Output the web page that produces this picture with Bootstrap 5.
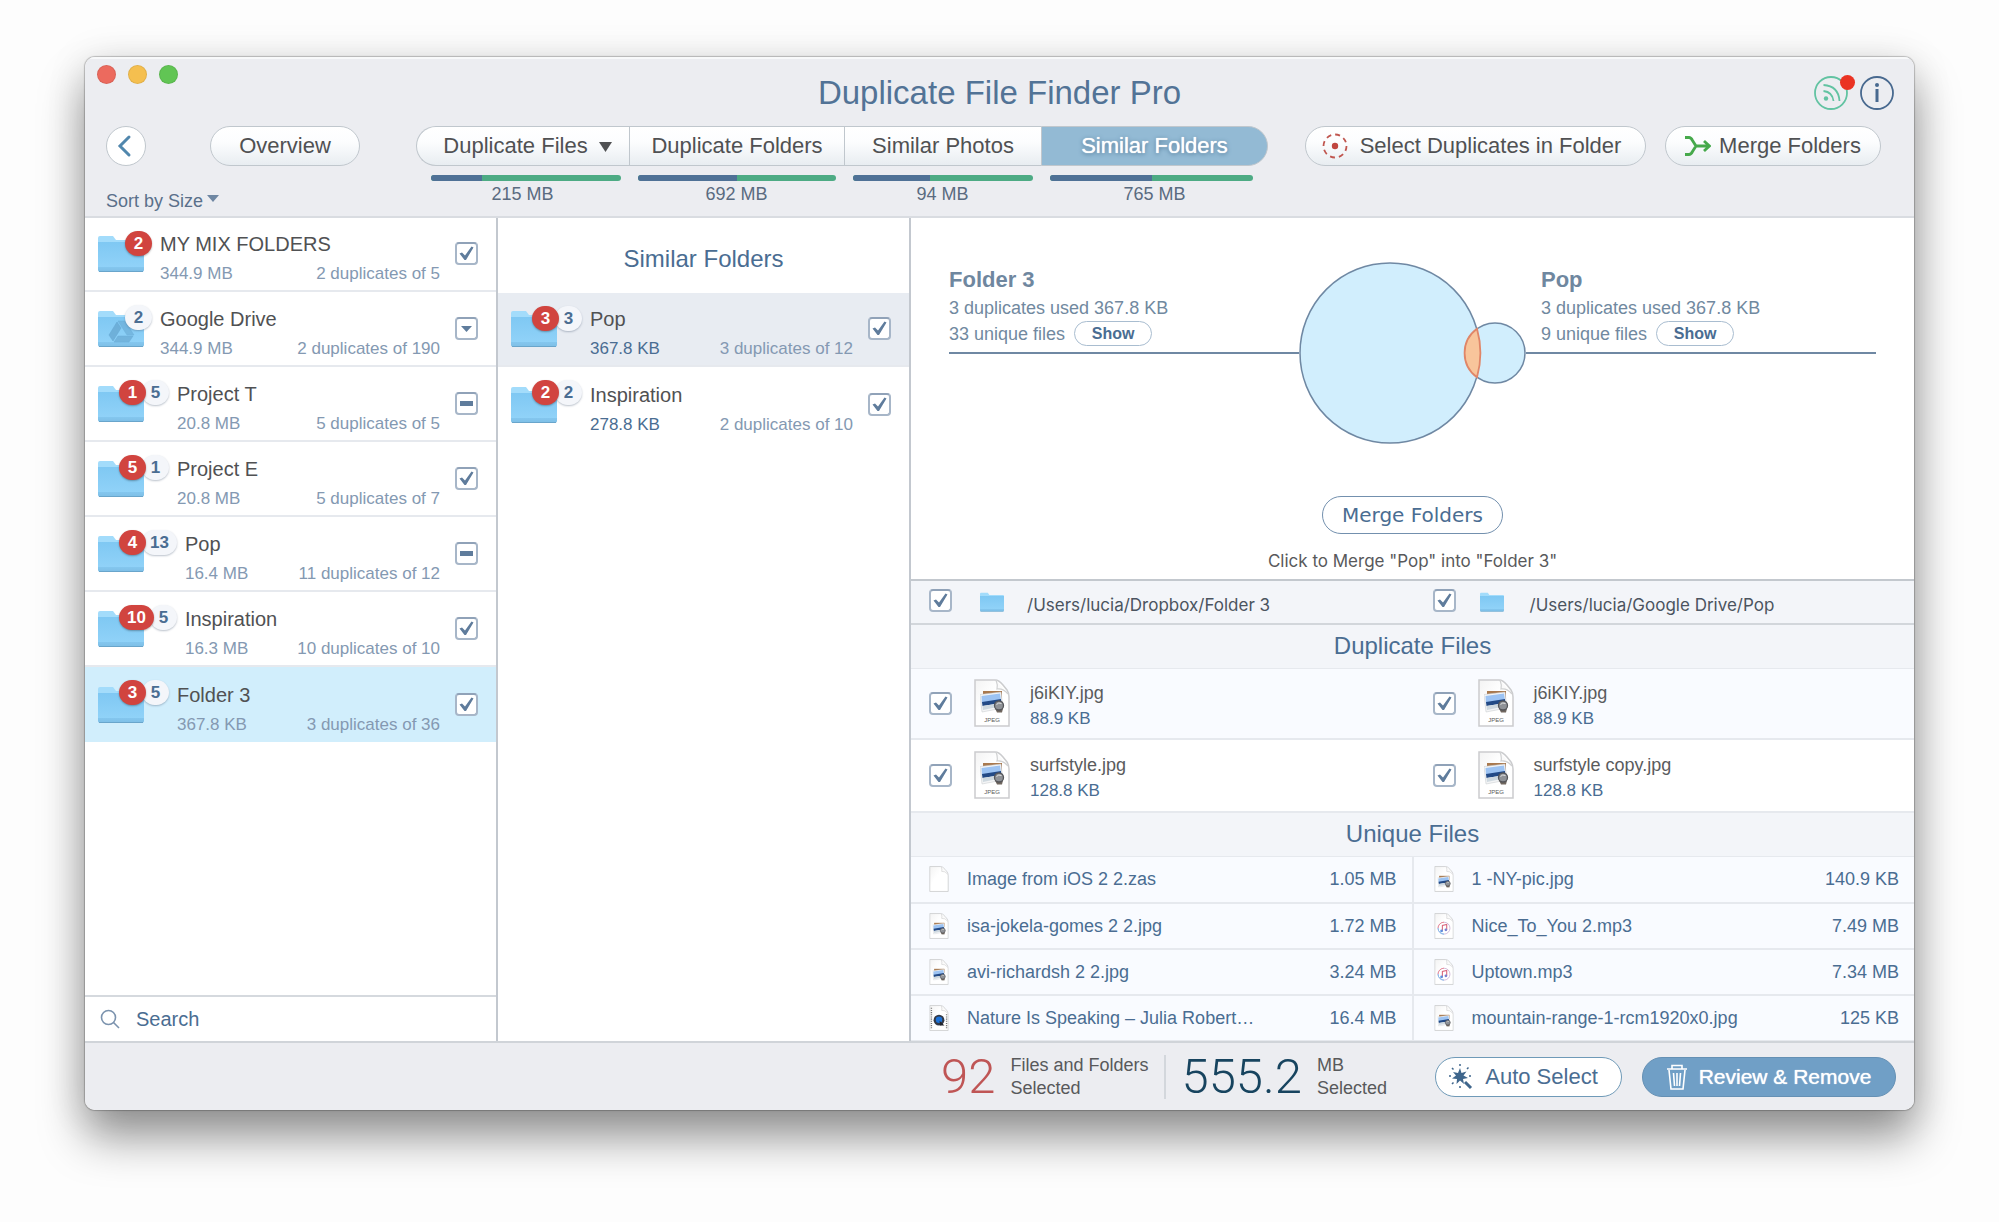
<!DOCTYPE html>
<html lang="en">
<head>
<meta charset="utf-8">
<meta name="viewport" content="width=device-width, initial-scale=1">
<title>Duplicate File Finder Pro</title>
<link href="https://cdn.jsdelivr.net/npm/bootstrap@5.3.0/dist/css/bootstrap.min.css" rel="stylesheet">
<style>
:root{--ink:#505153;--blue:#4a6d92;--soft:#8499b2;--line:#e6e9ee;--edge:#bfc5cc;--chrome:#ecedf1}
body{background:#fdfdfd;font-family:"Liberation Sans",Arial,sans-serif;font-size:18px;line-height:24px;color:var(--ink);min-height:100vh;padding:57px 85px 112px;display:flex}
.app-window{background:#fff;border-radius:10px;overflow:hidden;height:calc(100vh - 169px);min-height:1040px;box-shadow:0 0 1px 1px rgba(0,0,0,.22),0 28px 46px rgba(0,0,0,.4),0 4px 40px rgba(0,0,0,.12)}
.app-head{background:var(--chrome);border-bottom:2px solid #d9dce1;box-shadow:inset 0 2px 0 #f8f9fa;height:161px}
.title-row{display:grid;grid-template-columns:1fr auto 1fr;height:69px;padding:8px 12px 6px}
.light{width:19px;height:19px;border-radius:50%;border:1px solid rgba(0,0,0,.08)}
.app-title{font-size:33px;line-height:40px;color:#527396}
.round-icon{width:34px;height:34px;padding:0;border:0;background:none;position:relative}
.alert-dot{position:absolute;right:-7px;top:-1px;width:15px;height:15px;border-radius:50%;background:#ea3323}
.tool-row{padding:0 33px 0 21px}
.pill{height:40px;border:1px solid #c0c7cd;border-radius:20px;background:linear-gradient(#fff,#fcfdfe 40%,#e8edf1);font-size:22px;line-height:26px;color:var(--ink);padding:0;white-space:nowrap}
.pill-back{width:40px;background:#fff}
.pill-overview{width:150px;margin-left:64px}
.pill-select{width:341px;padding-right:8px}
.pill-merge{width:216px;margin-left:19px}
.sort-btn{border:0;background:none;padding:0;color:#5a708a;font-size:18px;line-height:24px;margin-top:23px}
.tabs-set{margin-left:56px}
.tab-col{display:flex;flex-direction:column}
.tab-a{width:213px}.tab-b{width:215px}.tab-c{width:197px}.tab-d{width:227px}
.tab-col .pill{border-radius:0;border-right-width:0}
.tab-a .pill{border-radius:20px 0 0 20px;padding-left:9px}
.tab-a .pill svg{margin-left:11px}
.tab-d .pill{border-radius:0 20px 20px 0;border-right-width:1px;background:#93bad4;color:#fff;text-shadow:0 0 1px #fff,0 1px 4px #47708f}
.meter{height:6px;border-radius:3px;background:#4dab84;margin:9px 8px 0 9px}
.tab-a .meter{margin-left:15px}.tab-d .meter{margin-right:15px}
.meter .progress-bar{background:#4f7196}
.meter-label{font-size:18px;line-height:24px;color:#5a6b80;text-align:center;margin-top:1px}
.side-col{width:413px;flex:none;border-right:2px solid #c3c8cf}
.list-group-flush>.folder-row{height:75px;border:0;border-bottom:2px solid var(--line);padding:0 18px 0 13px;display:flex;align-items:center;background:#fff;border-radius:0}
.list-group-flush>.folder-row:first-child{height:74px}
.list-group-flush>.folder-row.is-picked{background:#d1eefc}
.list-group-flush>.folder-row.is-hover{background:#e8ecf2}
.folder-pic{width:46px;height:37px;flex:none}
.tags{display:flex;align-self:flex-start;margin:13px 8px 0 -25px;position:relative}
.tags-one{margin-left:-19px}
.tag-n{min-width:27px;height:25px;border-radius:13px;padding:0 8px;font-size:17px;line-height:25px;font-weight:700;text-align:center}
.tag-red{background:#d1443f;color:#fff;position:relative;z-index:1;box-shadow:0 1px 2px rgba(0,0,0,.3)}
.tag-pale{background:#f4f6fa;color:var(--blue);box-shadow:0 1px 2px rgba(60,80,110,.35)}
.tag-red+.tag-pale{margin-left:-4px}
.row-text{padding-top:9px}
.row-name{font-size:20px;line-height:28px;color:var(--ink)}
.row-info{font-size:17px;line-height:24px;color:var(--soft);margin-top:4px}
.strong-size{color:var(--blue)}
.tick{width:23px;height:23px;flex:none;margin:0;border:2px solid #a7b6c8;border-top-color:#90a2b8;border-radius:4px;background:#fff center/17px no-repeat;appearance:none;padding:0}
.tick:checked{background-color:#fff;background-size:17px;background-image:url("data:image/svg+xml,%3Csvg xmlns='http://www.w3.org/2000/svg' viewBox='0 0 17 17'%3E%3Cpath d='M1.500 8.500l2.500-1 3 3L13.500 1.500l2 1L8 15H6.500z' fill='%235f7c9c'/%3E%3C/svg%3E")}
.tick.partial{background-image:url("data:image/svg+xml,%3Csvg xmlns='http://www.w3.org/2000/svg' viewBox='0 0 17 17'%3E%3Crect x='2' y='6' width='13' height='5' fill='%235f7c9c'/%3E%3C/svg%3E")}
.tick.opener{background-image:url("data:image/svg+xml,%3Csvg xmlns='http://www.w3.org/2000/svg' viewBox='0 0 17 17'%3E%3Cpath d='M3 6h11l-5.500 6z' fill='%235f7c9c'/%3E%3C/svg%3E")}
.folder-row .tick{margin-left:15px}
.search-bar{height:46px;border-top:2px solid #d5d9de;padding:0 15px}
.search-bar input{border:0;background:none;padding:0;font-size:20px;line-height:24px;color:var(--blue)}
.search-bar input::placeholder{color:var(--blue);opacity:1}
.search-bar input:focus{outline:0;box-shadow:none}
.head-24{font-size:24px;line-height:32px;color:var(--blue);font-weight:400;margin:0;text-align:center}
.col-two .head-24{height:75px;padding-top:25px}
.venn-area{padding:44px 38px 6px;border-bottom:2px solid #c3c8ce;height:363px}
.venn-side{height:92px;border-bottom:2px solid #6f88a3;color:#71899f;padding-top:5px;flex:1 1 30%;line-height:26px}
.venn-side.at-right{padding-left:15px}
.venn-name{font-size:22px;line-height:26px;font-weight:700;margin:0 0 2px;color:#6f879f}
.show-btn{height:25px;width:78px;border:1px solid #a9bdd0;border-radius:13px;background:#fff;color:var(--blue);font-size:16px;line-height:20px;font-weight:700;padding:0;margin-left:9px}
.merge-btn{width:181px;height:38px;border:1px solid #7390ae;border-radius:19px;background:#fff;color:var(--blue);font:400 20px/24px "DejaVu Sans",Verdana,sans-serif;margin-top:52px;padding:0}
.merge-note{font:400 17px/24px Inter,"Noto Sans",sans-serif;color:#58595b;margin:15px 0 0}
.band{background:#f3f5f9}
.path-band{height:44px;border-bottom:2px solid #d2d6db;color:#4b545f;font:400 17px/24px Inter,"Noto Sans",sans-serif}
.path-band label{padding-top:7px}
.title-band{height:44px;border-bottom:1px solid var(--line);padding-top:5px}
.half{flex:1 1 0;min-width:0;display:flex;align-items:center;padding-left:18px}
.half+.half{padding-left:22px;flex-basis:4px}
.path-band .tick{margin-bottom:2px}
.path-band .folder-small{width:24px;height:20px;margin:0 23px 0 28px}
.path-band .half+.half .folder-small{margin:0 26px 0 24px}
.dup-row{height:71px;border-bottom:2px solid var(--line)}
.dup-row+.dup-row{height:73px}
.dup-row.tinted{background:#f9fbff}
.dup-row label{padding-top:5px}
.page-big{width:36px;height:48px;margin:0 20px 0 22px;flex:none}
.dup-name{font-size:18px;line-height:26px;color:#5a5b5d}
.dup-size{font-size:17px;line-height:26px;color:var(--blue)}
.uniq{flex:1 1 0;background:#f9fbff;align-self:stretch}
.uniq+.uniq{border-left:2px solid var(--line)}
.uniq table{width:100%}
.uniq td{height:46px;padding:0;border-bottom:2px solid var(--line);font-size:18px;color:var(--blue);vertical-align:middle}
.uniq td:first-child{width:56px;padding-left:18px}
.uniq+.uniq td:first-child{padding-left:20px;width:58px}
.uniq td:last-child{text-align:right;padding-right:15px}
.page-small{width:20px;height:26px;display:block}
.app-foot{background:var(--chrome);border-top:2px solid #d0d4d9;height:69px;padding-right:18px}
.big-num{font-family:Roboto,"Liberation Sans",sans-serif;font-weight:300;font-size:49px;line-height:50px}
.num-red{color:#bf5555}.num-navy{color:#17445f}
.foot-text{font-size:18px;line-height:23px;color:#58595b;margin-left:15px}
.foot-split{border-left:2px solid #d3d7dc;height:44px;margin:0 15px 0 16px}
.pill-auto{width:187px;background:#fff;border-color:#6f9ab8;color:var(--blue);padding-right:10px}
.pill-auto svg{margin-right:12px}
.pill-remove{width:254px;background:#709fc6;border-color:#6590b4;color:#fff;text-shadow:0 0 1px #fff;font-size:21px;margin-left:20px}
.pill-remove svg{margin-right:12px}
</style>
</head>
<body>
<svg width="0" height="0" class="position-absolute" aria-hidden="true">
  <defs>
    <linearGradient id="gFolder" x1="0" y1="0" x2="0" y2="1"><stop offset="0" stop-color="#7fc8f3"/><stop offset=".85" stop-color="#90d2f8"/><stop offset=".86" stop-color="#83c6ee"/><stop offset="1" stop-color="#7fbfe6"/></linearGradient>
    <linearGradient id="gPage" x1="0" y1="0" x2="1" y2="1"><stop offset="0" stop-color="#f3f3f3"/><stop offset=".4" stop-color="#fff"/></linearGradient>
    <symbol id="folder" viewBox="0 0 46 37"><path d="M0 3q0-2 2-2h13l3 4h26q2 0 2 2v5H0z" fill="#a3dcfb"/><path d="M0 7h46v28q0 1.500-1.500 1.500h-43Q0 36.500 0 35z" fill="url(#gFolder)"/><path d="M1 36.500h44" stroke="#69a5cb"/></symbol>
    <symbol id="folder-drive" viewBox="0 0 46 37"><use href="#folder" width="46" height="37"/><g fill="#68a9d3" stroke="#5a9cc8" stroke-width=".5"><path d="M20 11h7l9 14h-7z" opacity=".6"/><path d="M19 12l4 6-8 13-4-6z" opacity=".8"/><path d="M20 26h15l-4 6H16z" opacity=".7"/></g></symbol>
    <symbol id="sheet" viewBox="0 0 36 48"><path d="M1 1h20q4 0 8 5l4 5q2 3 2 7v29H1z" fill="url(#gPage)" stroke="#cbccce" stroke-width="1.500"/><path d="M22 1q2 5 1 9 6-1 11 5" fill="#fafafa" stroke="#d0d1d2" stroke-width="1.200"/></symbol>
    <symbol id="photo" viewBox="0 0 26 23"><path d="M3 1h19v8H3z" fill="#a9794e"/><path d="M0 4.500L21 2l2 16-21 4z" fill="#f4f5f6" stroke="#c3c6ca" stroke-width=".5"/><path d="M1.500 6L20 3.500l1 7-19 3z" fill="#9cc3f3"/><path d="M2 12l19-3 .500 4-19 3z" fill="#234a86"/><path d="M2.500 16l19-3 .500 3-19 4z" fill="#cfd9e0"/><path d="M15 18.500h8l-1 4h-5z" fill="#71675f"/><circle cx="19" cy="15.500" r="4.500" fill="#8f9297" stroke="#55565a" stroke-width="1.300"/><path d="M16.500 14.500q2-2.500 5-1" stroke="#e3e3e3" fill="none"/></symbol>
    <symbol id="jpeg-big" viewBox="0 0 36 48"><use href="#sheet" width="36" height="48"/><use href="#photo" x="6" y="11" width="26" height="23"/><text x="18" y="43" text-anchor="middle" font-size="6" font-family="Liberation Sans" fill="#5b5b5b">JPEG</text></symbol>
    <symbol id="jpeg-small" viewBox="0 0 36 48"><use href="#sheet" width="36" height="48"/><use href="#photo" x="6" y="17" width="26" height="23"/></symbol>
    <symbol id="mp3-small" viewBox="0 0 36 48"><use href="#sheet" width="36" height="48"/><circle cx="18" cy="28" r="11" fill="#fff" stroke="#cdb3d6" stroke-width="1.600"/><path d="M7 28a11 11 0 0 1 11-11" stroke="#ee8590" stroke-width="1.600" fill="none"/><path d="M18 39a11 11 0 0 1-11-11" stroke="#6cb6ee" stroke-width="1.600" fill="none"/><path d="M15 33V23l8-2v10" fill="none" stroke="#d9667d" stroke-width="2"/><circle cx="13.500" cy="33" r="2.500" fill="#5a8fe0"/><circle cx="21.500" cy="31" r="2.500" fill="#7a7fcf"/></symbol>
    <symbol id="mov-small" viewBox="0 0 36 48"><use href="#sheet" width="36" height="48"/><path d="M4 5v40M32 17v28" stroke="#777" stroke-width="2.500" stroke-dasharray="2 2"/><circle cx="18" cy="28" r="10" fill="#333a48"/><circle cx="18" cy="27" r="6" fill="#1e73d8"/><path d="M19 29l9 9h-8z" fill="#20242c"/></symbol>
  </defs>
</svg>

<div class="app-window d-flex flex-column flex-fill">
  <header class="app-head">
    <div class="title-row">
      <div class="d-flex gap-2 align-items-start">
        <span class="light" style="background:#ec6a5e"></span>
        <span class="light ms-1" style="background:#f5bf4f"></span>
        <span class="light ms-1" style="background:#61c554"></span>
      </div>
      <h1 class="app-title m-0 align-self-center">Duplicate File Finder Pro</h1>
      <div class="d-flex justify-content-end align-items-center gap-2 me-2">
        <button class="round-icon me-1" type="button" aria-label="News">
          <svg class="d-block" viewBox="0 0 34 34" fill="none" stroke="#62c3a2" stroke-width="1.800"><circle cx="17" cy="17" r="16"/><circle cx="12" cy="22.500" r="2.200" fill="#62c3a2" stroke="none"/><path d="M9.500 15q9 1 10 10M9.500 9q15 1 16 16"/></svg>
          <span class="alert-dot"></span>
        </button>
        <button class="round-icon" type="button" aria-label="Information">
          <svg class="d-block" viewBox="0 0 34 34" fill="none" stroke="#48698f" stroke-width="1.800"><circle cx="17" cy="17" r="16"/><path d="M17 13v13" stroke-width="3"/><circle cx="17" cy="9" r="2" fill="#48698f" stroke="none"/></svg>
        </button>
      </div>
    </div>

    <div class="tool-row d-flex align-items-start">
      <div>
        <div class="d-flex">
          <button class="pill pill-back" type="button" aria-label="Back"><svg class="d-block mx-auto" width="24" height="24" viewBox="0 0 24 24" fill="none" stroke="#5187ad" stroke-width="3" stroke-linecap="round"><path d="M15 3L6 12l9 9"/></svg></button>
          <button class="pill pill-overview" type="button">Overview</button>
        </div>
        <button class="sort-btn" type="button">Sort by Size<svg class="ms-1 mb-2 align-middle" width="12" height="7" viewBox="0 0 12 7"><path d="M0 0h12L6 7z" fill="#6f87a3"/></svg></button>
      </div>

      <div class="tabs-set d-flex">
        <div class="tab-col tab-a">
          <button class="pill" type="button">Duplicate Files<svg width="13" height="10" viewBox="0 0 13 10"><path d="M0 0h13L6.500 10z" fill="#505153"/></svg></button>
          <div class="progress meter"><div class="progress-bar" style="width:27%"></div></div>
          <div class="meter-label">215 MB</div>
        </div>
        <div class="tab-col tab-b">
          <button class="pill" type="button">Duplicate Folders</button>
          <div class="progress meter"><div class="progress-bar" style="width:50%"></div></div>
          <div class="meter-label">692 MB</div>
        </div>
        <div class="tab-col tab-c">
          <button class="pill" type="button">Similar Photos</button>
          <div class="progress meter"><div class="progress-bar" style="width:43%"></div></div>
          <div class="meter-label">94 MB</div>
        </div>
        <div class="tab-col tab-d">
          <button class="pill" type="button" aria-pressed="true">Similar Folders</button>
          <div class="progress meter"><div class="progress-bar" style="width:50%"></div></div>
          <div class="meter-label">765 MB</div>
        </div>
      </div>

      <div class="d-flex ms-auto">
        <button class="pill pill-select d-flex align-items-center justify-content-center" type="button">
          <svg class="me-2" width="26" height="26" viewBox="0 0 26 26" fill="none"><circle cx="13" cy="13" r="11.500" stroke="#c0564f" stroke-width="1.800" stroke-dasharray="5 4"/><circle cx="13" cy="13" r="3.200" fill="#c0463f"/></svg>
          <span class="ms-1">Select Duplicates in Folder</span>
        </button>
        <button class="pill pill-merge d-flex align-items-center justify-content-center" type="button">
          <svg class="me-2" width="26" height="20" viewBox="0 0 26 20" fill="none" stroke="#46a94b" stroke-width="2.800"><path d="M0 1.500h4q2 0 3.500 3l3.500 5.500h12M0 18.500h4q2 0 3.500-3L11 10M19 5l5.500 5-5.500 5"/></svg>
          <span>Merge Folders</span>
        </button>
      </div>
    </div>
  </header>

  <main class="d-flex flex-fill" style="min-height:0">
    <section class="side-col d-flex flex-column">
      <ul class="list-group list-group-flush flex-fill">
        <li class="folder-row list-group-item">
          <svg class="folder-pic"><use href="#folder"/></svg>
          <span class="tags tags-one"><span class="tag-n tag-red">2</span></span>
          <div class="row-text flex-fill"><div class="row-name">MY MIX FOLDERS</div><div class="row-info d-flex justify-content-between"><span>344.9 MB</span><span>2 duplicates of 5</span></div></div>
          <input class="tick" type="checkbox" checked aria-label="Select MY MIX FOLDERS">
        </li>
        <li class="folder-row list-group-item">
          <svg class="folder-pic"><use href="#folder-drive"/></svg>
          <span class="tags tags-one"><span class="tag-n tag-pale">2</span></span>
          <div class="row-text flex-fill"><div class="row-name">Google Drive</div><div class="row-info d-flex justify-content-between"><span>344.9 MB</span><span>2 duplicates of 190</span></div></div>
          <button class="tick opener" type="button" aria-label="Options for Google Drive"></button>
        </li>
        <li class="folder-row list-group-item">
          <svg class="folder-pic"><use href="#folder"/></svg>
          <span class="tags"><span class="tag-n tag-red">1</span><span class="tag-n tag-pale">5</span></span>
          <div class="row-text flex-fill"><div class="row-name">Project T</div><div class="row-info d-flex justify-content-between"><span>20.8 MB</span><span>5 duplicates of 5</span></div></div>
          <input class="tick partial" type="checkbox" aria-label="Select Project T">
        </li>
        <li class="folder-row list-group-item">
          <svg class="folder-pic"><use href="#folder"/></svg>
          <span class="tags"><span class="tag-n tag-red">5</span><span class="tag-n tag-pale">1</span></span>
          <div class="row-text flex-fill"><div class="row-name">Project E</div><div class="row-info d-flex justify-content-between"><span>20.8 MB</span><span>5 duplicates of 7</span></div></div>
          <input class="tick" type="checkbox" checked aria-label="Select Project E">
        </li>
        <li class="folder-row list-group-item">
          <svg class="folder-pic"><use href="#folder"/></svg>
          <span class="tags"><span class="tag-n tag-red">4</span><span class="tag-n tag-pale">13</span></span>
          <div class="row-text flex-fill"><div class="row-name">Pop</div><div class="row-info d-flex justify-content-between"><span>16.4 MB</span><span>11 duplicates of 12</span></div></div>
          <input class="tick partial" type="checkbox" aria-label="Select Pop">
        </li>
        <li class="folder-row list-group-item">
          <svg class="folder-pic"><use href="#folder"/></svg>
          <span class="tags"><span class="tag-n tag-red">10</span><span class="tag-n tag-pale">5</span></span>
          <div class="row-text flex-fill"><div class="row-name">Inspiration</div><div class="row-info d-flex justify-content-between"><span>16.3 MB</span><span>10 duplicates of 10</span></div></div>
          <input class="tick" type="checkbox" checked aria-label="Select Inspiration">
        </li>
        <li class="folder-row list-group-item is-picked">
          <svg class="folder-pic"><use href="#folder"/></svg>
          <span class="tags"><span class="tag-n tag-red">3</span><span class="tag-n tag-pale">5</span></span>
          <div class="row-text flex-fill"><div class="row-name">Folder 3</div><div class="row-info d-flex justify-content-between"><span>367.8 KB</span><span>3 duplicates of 36</span></div></div>
          <input class="tick" type="checkbox" checked aria-label="Select Folder 3">
        </li>
      </ul>
      <label class="search-bar d-flex align-items-center gap-3">
        <svg width="20" height="20" viewBox="0 0 20 20" fill="none" stroke="#7b93ae" stroke-width="1.600"><circle cx="8.500" cy="8.500" r="7"/><path d="M13.500 13.500l5.500 5.500"/></svg>
        <input class="flex-fill" type="search" placeholder="Search" aria-label="Search">
      </label>
    </section>

    <section class="side-col col-two">
      <h2 class="head-24">Similar Folders</h2>
      <ul class="list-group list-group-flush">
        <li class="folder-row list-group-item is-hover">
          <svg class="folder-pic"><use href="#folder"/></svg>
          <span class="tags"><span class="tag-n tag-red">3</span><span class="tag-n tag-pale">3</span></span>
          <div class="row-text flex-fill"><div class="row-name">Pop</div><div class="row-info d-flex justify-content-between"><span class="strong-size">367.8 KB</span><span>3 duplicates of 12</span></div></div>
          <input class="tick" type="checkbox" checked aria-label="Select similar folder Pop">
        </li>
        <li class="folder-row list-group-item">
          <svg class="folder-pic"><use href="#folder"/></svg>
          <span class="tags"><span class="tag-n tag-red">2</span><span class="tag-n tag-pale">2</span></span>
          <div class="row-text flex-fill"><div class="row-name">Inspiration</div><div class="row-info d-flex justify-content-between"><span class="strong-size">278.8 KB</span><span>2 duplicates of 10</span></div></div>
          <input class="tick" type="checkbox" checked aria-label="Select similar folder Inspiration">
        </li>
      </ul>
    </section>

    <section class="flex-fill d-flex flex-column overflow-hidden">
      <div class="venn-area text-center">
        <div class="d-flex text-start">
          <div class="venn-side">
            <h3 class="venn-name">Folder 3</h3>
            <div>3 duplicates used 367.8 KB</div>
            <div class="d-flex align-items-center">33 unique files<button class="show-btn" type="button">Show</button></div>
          </div>
          <svg class="flex-shrink-0" width="227" height="182" viewBox="0 0 227 182" role="img" aria-label="Overlap of Folder 3 and Pop">
            <g fill="#d1eefd" stroke="#6f88a3" stroke-width="1.500"><circle cx="91" cy="91" r="90"/><circle cx="196" cy="91" r="30"/></g>
            <path d="M178 66.700A90 90 0 0 1 178 115.300A30 30 0 0 1 178 66.700z" fill="#f8c59b" stroke="#e08668" stroke-width="1.800"/>
          </svg>
          <div class="venn-side at-right">
            <h3 class="venn-name">Pop</h3>
            <div>3 duplicates used 367.8 KB</div>
            <div class="d-flex align-items-center">9 unique files<button class="show-btn" type="button">Show</button></div>
          </div>
        </div>
        <button class="merge-btn" type="button">Merge Folders</button>
        <p class="merge-note">Click to Merge "Pop" into "Folder 3"</p>
      </div>

      <div class="band path-band d-flex flex-shrink-0">
        <div class="half"><input class="tick" type="checkbox" checked id="pathA"><svg class="folder-small"><use href="#folder"/></svg><label for="pathA">/Users/lucia/Dropbox/Folder 3</label></div>
        <div class="half"><input class="tick" type="checkbox" checked id="pathB"><svg class="folder-small"><use href="#folder"/></svg><label for="pathB">/Users/lucia/Google Drive/Pop</label></div>
      </div>
      <h2 class="head-24 band title-band flex-shrink-0">Duplicate Files</h2>
      <div class="dup-row tinted d-flex flex-shrink-0">
        <div class="half"><input class="tick" type="checkbox" checked id="f1"><svg class="page-big"><use href="#jpeg-big"/></svg><label for="f1"><span class="dup-name d-block">j6iKIY.jpg</span><span class="dup-size d-block">88.9 KB</span></label></div>
        <div class="half"><input class="tick" type="checkbox" checked id="f2"><svg class="page-big"><use href="#jpeg-big"/></svg><label for="f2"><span class="dup-name d-block">j6iKIY.jpg</span><span class="dup-size d-block">88.9 KB</span></label></div>
      </div>
      <div class="dup-row d-flex flex-shrink-0">
        <div class="half"><input class="tick" type="checkbox" checked id="f3"><svg class="page-big"><use href="#jpeg-big"/></svg><label for="f3"><span class="dup-name d-block">surfstyle.jpg</span><span class="dup-size d-block">128.8 KB</span></label></div>
        <div class="half"><input class="tick" type="checkbox" checked id="f4"><svg class="page-big"><use href="#jpeg-big"/></svg><label for="f4"><span class="dup-name d-block">surfstyle copy.jpg</span><span class="dup-size d-block">128.8 KB</span></label></div>
      </div>
      <h2 class="head-24 band title-band flex-shrink-0">Unique Files</h2>
      <div class="d-flex flex-fill">
        <div class="uniq"><table>
          <tr><td><svg class="page-small"><use href="#sheet"/></svg></td><td>Image from iOS 2 2.zas</td><td>1.05 MB</td></tr>
          <tr><td><svg class="page-small"><use href="#jpeg-small"/></svg></td><td>isa-jokela-gomes 2 2.jpg</td><td>1.72 MB</td></tr>
          <tr><td><svg class="page-small"><use href="#jpeg-small"/></svg></td><td>avi-richardsh 2 2.jpg</td><td>3.24 MB</td></tr>
          <tr><td><svg class="page-small"><use href="#mov-small"/></svg></td><td>Nature Is Speaking – Julia Robert…</td><td>16.4 MB</td></tr>
        </table></div>
        <div class="uniq"><table>
          <tr><td><svg class="page-small"><use href="#jpeg-small"/></svg></td><td>1 -NY-pic.jpg</td><td>140.9 KB</td></tr>
          <tr><td><svg class="page-small"><use href="#mp3-small"/></svg></td><td>Nice_To_You 2.mp3</td><td>7.49 MB</td></tr>
          <tr><td><svg class="page-small"><use href="#mp3-small"/></svg></td><td>Uptown.mp3</td><td>7.34 MB</td></tr>
          <tr><td><svg class="page-small"><use href="#jpeg-small"/></svg></td><td>mountain-range-1-rcm1920x0.jpg</td><td>125 KB</td></tr>
        </table></div>
      </div>
    </section>
  </main>

  <footer class="app-foot d-flex align-items-center justify-content-end">
    <span class="big-num num-red">92</span>
    <span class="foot-text">Files and Folders<br>Selected</span>
    <span class="foot-split"></span>
    <span class="big-num num-navy">555.2</span>
    <span class="foot-text me-5">MB<br>Selected</span>
    <button class="pill pill-auto d-flex align-items-center justify-content-center" type="button">
      <svg width="24" height="26" viewBox="0 0 24 26" fill="#3f668c" stroke="#3f668c"><path d="M11 4l1.500 5 5-1.500-3 4 4.500 2.500-5 1 1 5-4-3.500-3.500 3.500.500-5-5-.500 4-3L4 8l5 1z" stroke="none"/><path d="M16 18l6 6" stroke-width="3"/><path d="M11 0v2M11 22v2M0 12h2M20 12h2M3 4l1.500 1.500M18 5l1.500-1.500M3 20l1.500-1.500" stroke-width="1.500"/></svg>
      <span>Auto Select</span>
    </button>
    <button class="pill pill-remove d-flex align-items-center justify-content-center" type="button">
      <svg width="20" height="26" viewBox="0 0 20 26" fill="none" stroke="#fff" stroke-width="1.600"><path d="M0 5h20M5 4.500V1.500h10v3M2 6l2 19h12l2-19M6.500 9l1 13M10 9v13M13.500 9l-1 13"/></svg>
      <span>Review &amp; Remove</span>
    </button>
  </footer>
</div>
<script src="https://cdn.jsdelivr.net/npm/bootstrap@5.3.0/dist/js/bootstrap.bundle.min.js"></script>
</body>
</html>
